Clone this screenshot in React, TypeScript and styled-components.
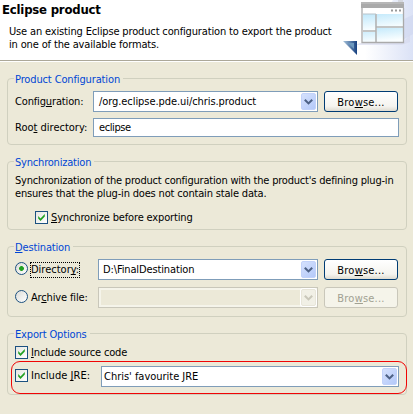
import React from 'react';
import styled, { createGlobalStyle } from 'styled-components';

const GlobalStyle = createGlobalStyle`
  * { box-sizing: border-box; }
  body { margin: 0; background: #ece9d8; overflow: hidden; }
`;

const Dialog = styled.main`
  width: 413px;
  height: 414px;
  display: flex;
  flex-direction: column;
  background: #ece9d8;
  color: #000;
  font: 11px/13px 'DejaVu Sans Condensed', 'DejaVu Sans', sans-serif;
  font-stretch: condensed;
  white-space: nowrap;
`;

const Header = styled.header`
  flex: none;
  height: 62px;
  display: flex;
  justify-content: space-between;
  background: #fff;
  border-bottom: 1px solid #fff;
  box-shadow: inset 0 -1px #aca899;
`;

const HeaderText = styled.div`
  padding: 2px 0 0 2px;
`;

const Title = styled.h1`
  margin: 0;
  font-size: 13px;
  line-height: 16px;
  font-weight: bold;
  letter-spacing: -0.2px;
`;

const Description = styled.div`
  padding: 7px 0 0 7px;
`;

const Text = styled.span<{ $track?: number }>`
  letter-spacing: ${(p) => p.$track ?? -0.15}px;
`;

const TextLine = styled(Text)`
  display: block;
`;

const Mnemonic = styled.u`
  text-decoration-thickness: 1px;
  text-underline-offset: 1px;
  text-decoration-skip-ink: none;
`;

const Groups = styled.div`
  display: flex;
  flex-direction: column;
  gap: 16px;
  padding: 16px 6px 0 7px;
`;

const Group = styled.section<{ $height: number }>`
  height: ${(p) => p.$height}px;
  border: 1px solid #d0d0bf;
  border-radius: 4px;
  padding: 0 7px;
`;

const Legend = styled.h2<{ $track?: number }>`
  width: max-content;
  height: 12px;
  margin: -6px 0 0 -1px;
  padding: 0 3px 0 1px;
  background: #ece9d8;
  color: #0046d5;
  font: inherit;
  letter-spacing: ${(p) => p.$track ?? -0.15}px;
`;

const Row = styled.div<{ $top: number; $height?: number }>`
  display: flex;
  align-items: center;
  height: ${(p) => p.$height ?? 21}px;
  margin-top: ${(p) => p.$top}px;
`;

const Label = styled.label<{ $width: number; $track?: number }>`
  flex: none;
  width: ${(p) => p.$width}px;
  letter-spacing: ${(p) => p.$track ?? -0.15}px;
`;

const Field = styled.div<{ $disabled?: boolean; $pad?: number }>`
  flex: 1;
  height: 100%;
  display: flex;
  align-items: center;
  justify-content: space-between;
  padding: 1px 1px 1px ${(p) => p.$pad ?? 5}px;
  border: 1px solid ${(p) => (p.$disabled ? '#c9c7ba' : '#7f9db9')};
  background: ${(p) => (p.$disabled ? '#ece9d8' : '#fff')};
  box-shadow: ${(p) => (p.$disabled ? 'inset 0 0 0 2px #f5f4ea' : 'none')};
`;

const Drop = styled.span<{ $disabled?: boolean }>`
  width: 15px;
  height: 17px;
  display: grid;
  place-items: center;
  border-radius: 2px;
  border: 1px solid ${(p) => (p.$disabled ? '#e8e6da' : '#c2d2fa')};
  background: ${(p) => (p.$disabled ? '#f1f0e6' : 'linear-gradient(135deg, #d5e1fd, #b4c9f9)')};
  box-shadow: 0 0 0 1px #fff;
`;

const PushButton = styled.button<{ $disabled?: boolean }>`
  flex: none;
  width: 74px;
  height: 21px;
  margin: 0 1px 0 6px;
  padding: 1px 0 0;
  border: 1px solid ${(p) => (p.$disabled ? '#c9c7ba' : '#003c74')};
  border-radius: 3px;
  background: ${(p) => (p.$disabled ? '#f5f4ea' : 'linear-gradient(#fff, #f5f4ef 75%, #dedbd0)')};
  color: ${(p) => (p.$disabled ? '#a1a192' : '#000')};
  font: inherit;
  letter-spacing: 0.2px;
`;

const CheckBox = styled.span`
  flex: none;
  width: 13px;
  height: 13px;
  display: grid;
  place-items: center;
  margin-right: 3px;
  border: 1px solid #1c5180;
  background: linear-gradient(135deg, #e6e6e1, #fff);
`;

const RadioDot = styled.span<{ $on?: boolean }>`
  flex: none;
  width: 13px;
  height: 13px;
  margin: 0 3px 2px 0;
  border: 1px solid #1c5180;
  border-radius: 50%;
  background: ${(p) => (p.$on ? 'radial-gradient(circle, #21a121 0 2px, transparent 2.8px),' : '')}
    linear-gradient(135deg, #dcdcd7, #fff);
`;

const FocusLabel = styled.span`
  margin-left: -1px;
  padding: 0 0 1px;
  border: 1px dotted #000;
`;

const Note = styled.div`
  margin-top: 6px;
`;

const Highlight = styled.div`
  display: flex;
  align-items: flex-start;
  width: 396px;
  height: 33px;
  margin: 2px 0 0 -4px;
  padding: 7px 7px 0 3px;
  border: 1px solid #f00505;
  border-radius: 9px;
`;

const JreCombo = styled.div`
  flex: 1;
  display: flex;
  height: 21px;
  margin-top: -3px;
`;

const Chevron = ({ color }: { color: string }) => (
  <svg width="9" height="6" viewBox="0 0 9 6">
    <path d="M.8.8 4.5 4.4 8.2.8" fill="none" stroke={color} strokeWidth="2.1" />
  </svg>
);

const Checked = () => (
  <CheckBox>
    <svg width="9" height="9" viewBox="0 0 9 9">
      <path d="M1.2 3 3.5 5.4 7.8 1v2.6L3.5 8 1.2 5.6Z" fill="#21a121" />
    </svg>
  </CheckBox>
);

interface ComboProps {
  value: string;
  track?: number;
  pad?: number;
  disabled?: boolean;
}

const Combo = ({ value, track, pad, disabled }: ComboProps) => (
  <Field $disabled={disabled} $pad={pad}>
    <Text $track={track}>{value}</Text>
    <Drop $disabled={disabled}>
      <Chevron color={disabled ? '#c9c7ba' : '#4d6185'} />
    </Drop>
  </Field>
);

const Browse = ({ disabled }: { disabled?: boolean }) => (
  <PushButton $disabled={disabled}>
    Bro<Mnemonic>w</Mnemonic>se...
  </PushButton>
);

const WizardBanner = () => (
  <svg width="75" height="60" viewBox="0 0 75 60">
    <defs>
      <linearGradient id="glow" x1="0" y1="0" x2="1" y2="0">
        <stop offset="0.2" stopColor="#fff" />
        <stop offset="1" stopColor="#dbe2f6" />
      </linearGradient>
      <linearGradient id="pane" x1="0" y1="0" x2="0.3" y2="1">
        <stop offset="0" stopColor="#c0e8fb" />
        <stop offset="1" stopColor="#fafeff" />
      </linearGradient>
      <linearGradient id="corner">
        <stop offset="0" stopColor="#a9c5dc" />
        <stop offset="1" stopColor="#174080" />
      </linearGradient>
    </defs>
    <path d="M55 0h20v60H15Z" fill="url(#glow)" />
    <path d="M66 19 75 15v19l-9 5Z" fill="#cbd3ed" opacity=".5" />
    <path d="M22 43h43l7-9v8l-8 3H18Z" fill="#d6d9ec" opacity=".6" />
    <path d="M60 1h5" stroke="#c7c7c7" />
    <path d="M23 2h43v41H23Z" fill="#fff" />
    <path d="M23 2h43v6H23Z" fill="#aaa" />
    <path d="M23 3h43" stroke="#c4c4c4" />
    <path d="M25 14h13v16H25ZM39 14h26v12H39Z" fill="url(#pane)" />
    <path d="M25 32h13v10H25ZM39 28h26v14H39Z" fill="url(#pane)" />
    <path d="M38 14v28M25 31h13M38 27h27" stroke="#b0b2b3" strokeWidth="1.6" />
    <path d="M24 8v34.5h41.5V8" fill="none" stroke="#aaa" strokeWidth="1.3" />
    <path d="M25 14h13" stroke="#b7c3ca" />
    <path d="M53 10.5h2M57 10.5h2M61 10.5h2" stroke="#999" strokeWidth="2" />
    <path d="M5 41h14v14Z" fill="url(#corner)" />
    <path d="M10 43h6v6Z" fill="#6d99bf" />
  </svg>
);

export default function App() {
  return (
    <Dialog>
      <GlobalStyle />
      <Header>
        <HeaderText>
          <Title>Eclipse product</Title>
          <Description>
            <TextLine>Use an existing Eclipse product configuration to export the product</TextLine>
            <TextLine>in one of the available formats.</TextLine>
          </Description>
        </HeaderText>
        <WizardBanner />
      </Header>
      <Groups>
        <Group $height={67}>
          <Legend $track={-0.13}>Product Configuration</Legend>
          <Row $top={6}>
            <Label $width={78}>Config<Mnemonic>u</Mnemonic>ration:</Label>
            <Combo value="/org.eclipse.pde.ui/chris.product" track={-0.07} />
            <Browse />
          </Row>
          <Row $top={6} $height={19}>
            <Label $width={78} $track={0}>Roo<Mnemonic>t</Mnemonic> directory:</Label>
            <Field><Text $track={-0.4}>eclipse</Text></Field>
          </Row>
        </Group>
        <Group $height={69}>
          <Legend $track={-0.2}>Synchronization</Legend>
          <Note>
            <TextLine $track={-0.2}>
              Synchronization of the product configuration with the product's defining plug-in
            </TextLine>
            <TextLine $track={-0.17}>ensures that the plug-in does not contain stale data.</TextLine>
          </Note>
          <Row $top={7}>
            <Label $width={20} />
            <Checked />
            <Text $track={-0.15}><Mnemonic>S</Mnemonic>ynchronize before exporting</Text>
          </Row>
        </Group>
        <Group $height={71}>
          <Legend><Mnemonic>D</Mnemonic>estination</Legend>
          <Row $top={6}>
            <RadioDot $on />
            <Label $width={67} $track={0}>
              <FocusLabel>Director<Mnemonic>y</Mnemonic>:</FocusLabel>
            </Label>
            <Combo value="D:\FinalDestination" track={-0.13} pad={4} />
            <Browse />
          </Row>
          <Row $top={7}>
            <RadioDot />
            <Label $width={67}>Ar<Mnemonic>c</Mnemonic>hive file:</Label>
            <Combo value="" disabled />
            <Browse disabled />
          </Row>
        </Group>
        <Group $height={62}>
          <Legend>Export Options</Legend>
          <Row $top={6} $height={13}>
            <Checked />
            <Text><Mnemonic>I</Mnemonic>nclude source code</Text>
          </Row>
          <Highlight>
            <Checked />
            <Label $width={70} $track={0.05}>Include <Mnemonic>J</Mnemonic>RE:</Label>
            <JreCombo>
              <Combo value="Chris' favourite JRE" track={-0.02} pad={2} />
            </JreCombo>
          </Highlight>
        </Group>
      </Groups>
    </Dialog>
  );
}
